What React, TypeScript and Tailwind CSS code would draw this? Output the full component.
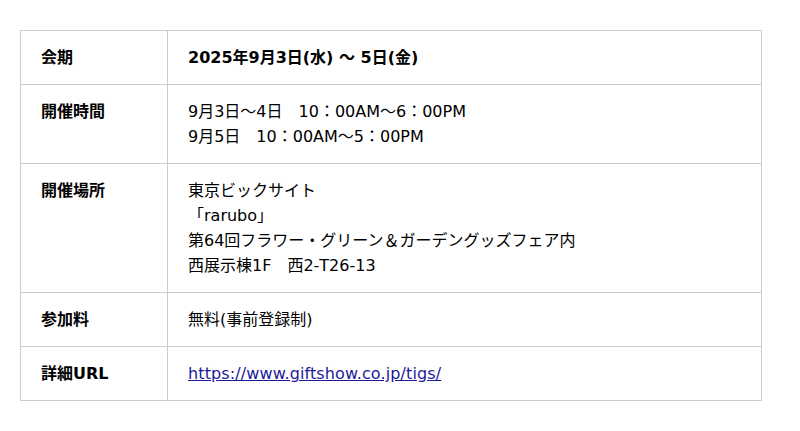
import React from "react";

const rows: { label: string; lines: React.ReactNode[]; bold?: boolean }[] = [
  { label: "会期", lines: ["2025年9月3日(水) 〜 5日(金)"], bold: true },
  { label: "開催時間", lines: ["9月3日〜4日　10：00AM〜6：00PM", "9月5日　10：00AM〜5：00PM"] },
  {
    label: "開催場所",
    lines: ["東京ビックサイト", "「rarubo」", "第64回フラワー・グリーン＆ガーデングッズフェア内", "西展示棟1F　西2-T26-13"],
  },
  { label: "参加料", lines: ["無料(事前登録制)"] },
  {
    label: "詳細URL",
    lines: [
      <a key="u" href="#" className="text-[#1b1b9a] underline tracking-[0.12px]">
        https://www.giftshow.co.jp/tigs/
      </a>,
    ],
  },
];

export default function App() {
  return (
    <div
      className="w-[800px] h-[431px] bg-white pt-[30px] pl-[20px]"
      style={{ fontFamily: '"DejaVu Sans", "Noto Sans CJK JP", sans-serif' }}
    >
      <table className="w-[742px] border-collapse text-[16px] leading-[25px] text-black">
        <tbody>
          {rows.map((r) => (
            <tr key={r.label}>
              <th className="w-[147px] border border-[#cccccc] px-5 py-[14px] text-left align-top font-bold">
                {r.label}
              </th>
              <td className={`border border-[#cccccc] px-5 py-[14px] align-top ${r.bold ? "font-bold" : "font-normal"}`}>
                {r.lines.map((l, i) => (
                  <div key={i}>{l}</div>
                ))}
              </td>
            </tr>
          ))}
        </tbody>
      </table>
    </div>
  );
}
